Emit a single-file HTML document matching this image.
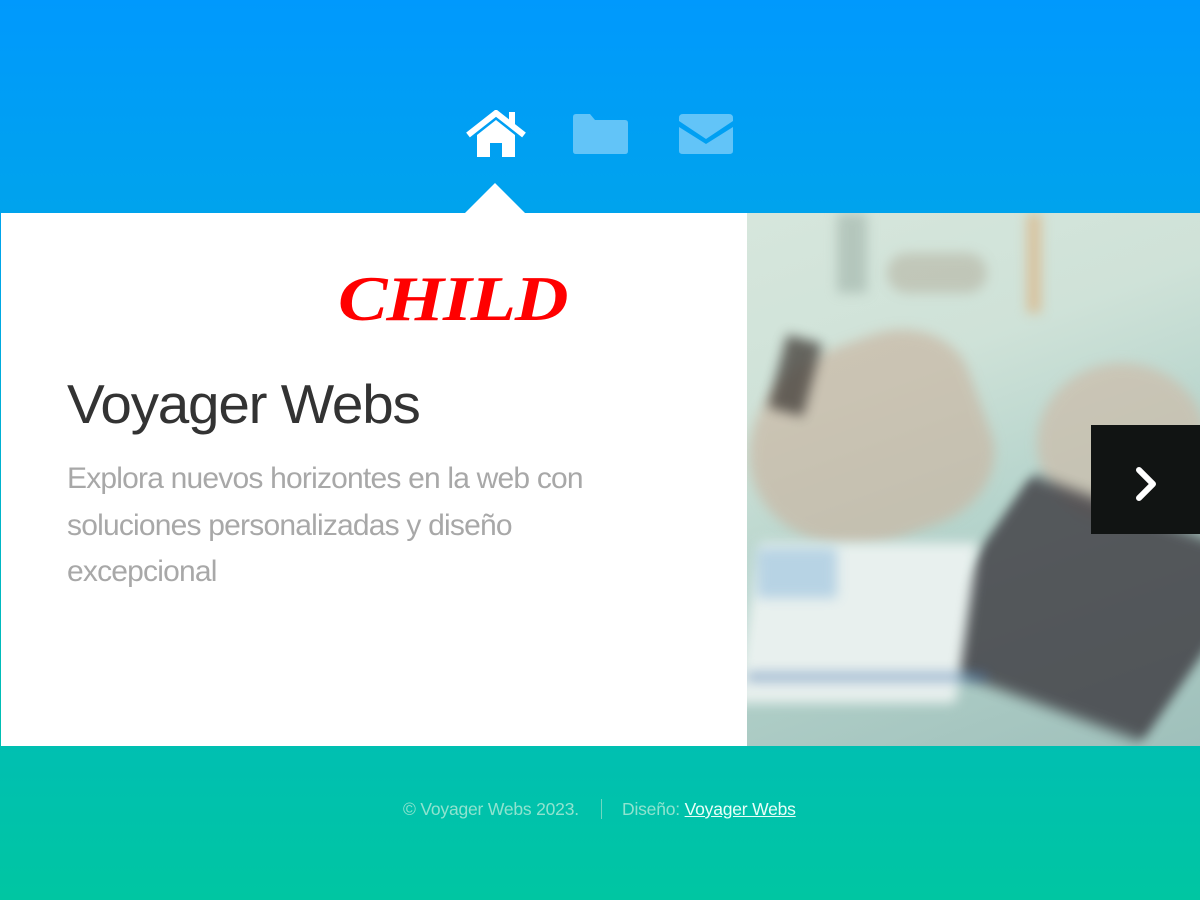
<!DOCTYPE html>
<html><head><meta charset="utf-8"><style>
*{margin:0;padding:0;box-sizing:border-box}
body{width:1200px;height:900px;overflow:hidden;background:linear-gradient(180deg,#0099fd 0%,#00a6e8 30%,#00b6c6 60%,#00c6a2 100%);font-family:"Liberation Sans",sans-serif;position:relative}
.panel{position:absolute;left:1px;top:213px;width:746px;height:533px;background:#fff}
.photo{position:absolute;left:747px;top:213px;width:453px;height:533px;overflow:hidden;background:linear-gradient(160deg,#d6e6dc 0%,#cfe2d8 30%,#b6d4cc 55%,#9fc0bb 100%)}
.tri{position:absolute;left:465px;top:183px;width:0;height:0;border-left:30px solid transparent;border-right:30px solid transparent;border-bottom:30px solid #fff}
.child{position:absolute;left:338px;top:262px;font-family:"Liberation Serif",serif;font-style:italic;font-weight:bold;font-size:64px;color:#f00;letter-spacing:-1px;transform:scaleX(1.16);transform-origin:left}
h1{position:absolute;left:67px;top:372px;font-weight:normal;font-size:55px;color:#333;letter-spacing:-1.2px;transform:scaleX(1.03);transform-origin:left;white-space:nowrap}
.sub{position:absolute;left:67px;top:456px;font-size:30px;line-height:46.5px;color:#a8a8a8;letter-spacing:-0.8px;white-space:nowrap}
.foot{position:absolute;top:799px;left:0;width:1200px;font-size:17.5px;color:#8fe3cf;letter-spacing:-0.2px}
.foot span{position:absolute;white-space:nowrap}
.foot a{color:#e8fff8;text-decoration:underline}
.next{position:absolute;left:1091px;top:425px;width:109px;height:109px;background:#111413}
.b{position:absolute;filter:blur(6px)}
</style></head><body>
<svg style="position:absolute;left:465px;top:110px" width="62" height="50" viewBox="0 0 62 50">
<path d="M3 25 L31 3 L59 25" stroke="#fff" stroke-width="6" fill="none" stroke-linejoin="miter"/>
<rect x="44" y="2" width="6" height="14" fill="#fff"/>
<path d="M12 25 L31 10 L50 25 V47 H37 V33 H25 V47 H12 Z" fill="#fff"/>
</svg>
<svg style="position:absolute;left:573px;top:114px" width="56" height="41" viewBox="0 0 56 41">
<path d="M0 3 Q0 0 3 0 H17 L22 6 H52 Q55 6 55 9 V37 Q55 40 52 40 H3 Q0 40 0 37 Z" fill="#62c4f8"/>
</svg>
<svg style="position:absolute;left:679px;top:114px" width="55" height="41" viewBox="0 0 55 41">
<path d="M0 4 Q0 0 4 0 H50 Q54 0 54 4 V7 L27 25 L0 7 Z" fill="#62c4f8"/>
<path d="M0 13 L27 30 L54 13 V37 Q54 40 50 40 H4 Q0 40 0 37 Z" fill="#62c4f8"/>
</svg>
<div class="tri"></div>
<div class="panel"></div>
<div class="child">CHILD</div>
<h1>Voyager Webs</h1>
<div class="sub">Explora nuevos horizontes en la web con<br>soluciones personalizadas y diseño<br>excepcional</div>
<div class="photo">
<div class="b" style="left:90px;top:0;width:30px;height:80px;background:#9fb2a8;opacity:.6"></div>
<div class="b" style="left:140px;top:40px;width:100px;height:40px;background:#a89c88;opacity:.4;border-radius:20px"></div>
<div class="b" style="left:280px;top:0;width:14px;height:100px;background:#e0a060;opacity:.5"></div>
<div class="b" style="left:0;top:130px;width:240px;height:200px;background:#c9b7a4;border-radius:60% 40% 40% 60%;opacity:.7;transform:rotate(-20deg)"></div>
<div class="b" style="left:30px;top:125px;width:36px;height:75px;background:#4a4540;transform:rotate(15deg);opacity:.8"></div>
<div class="b" style="left:290px;top:150px;width:170px;height:160px;background:#cdbcaa;border-radius:50%;opacity:.7"></div>
<div class="b" style="left:200px;top:300px;width:280px;height:190px;background:#3d3a40;transform:skew(-20deg) rotate(18deg);opacity:.8"></div>
<div class="b" style="left:0;top:330px;width:220px;height:160px;background:#e8f0ee;transform:skew(-8deg)"></div>
<div class="b" style="left:10px;top:335px;width:80px;height:50px;background:#6fa8d6;opacity:.4"></div>
<div class="b" style="left:0;top:460px;width:240px;height:8px;background:#3a6aa8;opacity:.5"></div>
</div>
<div class="next"></div>
<svg style="position:absolute;left:1133px;top:466px" width="26" height="36" viewBox="0 0 26 36"><path d="M6 4 L20 18 L6 32" stroke="#fff" stroke-width="6" fill="none" stroke-linecap="round" stroke-linejoin="round"/></svg>
<div class="foot">
<span style="left:403px">© Voyager Webs 2023.</span>
<span style="left:601px;top:0;width:1px;height:20px;background:#6fd8c0"></span>
<span style="left:622px">Diseño: <a>Voyager Webs</a></span>
</div>
</body></html>
